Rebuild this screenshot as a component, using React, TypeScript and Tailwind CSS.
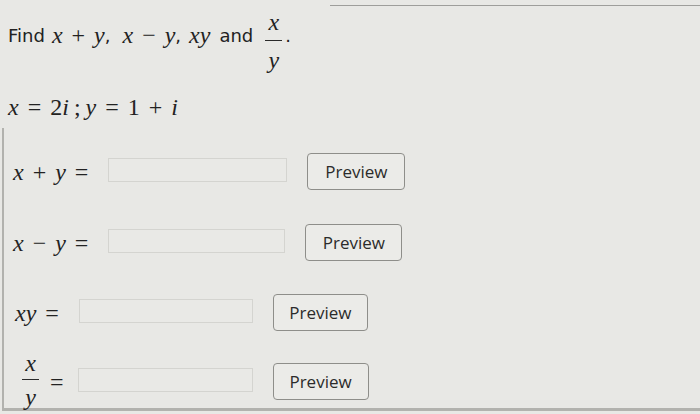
import React from "react";

const mathFont = "font-['Liberation_Serif','DejaVu_Serif',serif]";
const sansFont = "font-['DejaVu_Sans','Liberation_Sans',sans-serif]";

function V({ children }: { children: React.ReactNode }) {
  return <span className="italic">{children}</span>;
}

function Op({ children }: { children: React.ReactNode }) {
  return <span className="mx-[9px]">{children}</span>;
}

type FracProps = {
  num: React.ReactNode;
  den: React.ReactNode;
  className?: string;
  top?: string;
  bottom?: string;
};

function Frac({ num, den, className = "", top = "pb-[4px]", bottom = "pt-[5px]" }: FracProps) {
  return (
    <span className={`inline-flex flex-col items-center leading-none ${className}`}>
      <span className={top}>{num}</span>
      <span className="h-px w-[17px] bg-[#2a2a2a]" />
      <span className={bottom}>{den}</span>
    </span>
  );
}

type RowProps = {
  label: React.ReactNode;
  className: string;
  inputWidth: string;
  buttonWidth: string;
};

function AnswerRow({ label, className, inputWidth, buttonWidth }: RowProps) {
  return (
    <div className={`flex h-[37px] items-center ${className}`}>
      <div className={`${mathFont} flex items-center text-[24px] text-[#222] whitespace-nowrap`}>{label}</div>
      <div className={`ml-[11px] mt-[-3px] h-[24px] shrink-0 border border-[#d4d4d0] bg-[#e9e9e6] ${inputWidth}`} />
      <button
        className={`ml-[20px] h-[37px] shrink-0 rounded-[4px] border border-[#8e8e8a] bg-[#ebebe8] font-['Open_Sans',sans-serif] text-[17px] text-[#2b2b2b] ${buttonWidth}`}
      >
        Preview
      </button>
    </div>
  );
}

export default function App() {
  return (
    <div className="h-[414px] w-[700px] overflow-hidden bg-[#e8e8e5] text-[#222]">
      <div className="flex pt-[5px]">
        <div className="w-[330px]" />
        <div className="flex-1 border-t border-[#9e9e9b]" />
      </div>

      <div className={`ml-[8px] mt-[-8px] flex items-center ${sansFont} text-[18px]`}>
        <span>Find</span>
        <span className={`${mathFont} ml-[7px] text-[24px]`}>
          <V>x</V>
          <Op>+</Op>
          <V>y</V>
        </span>
        <span>,</span>
        <span className={`${mathFont} ml-[12px] text-[24px]`}>
          <V>x</V>
          <Op>−</Op>
          <V>y</V>
        </span>
        <span>,</span>
        <span className={`${mathFont} ml-[8px] text-[24px]`}>
          <V>xy</V>
        </span>
        <span className="ml-[9px]">and</span>
        <Frac
          num={<V>x</V>}
          den={<V>y</V>}
          top="pb-[6px]"
          bottom="pt-[7px]"
          className={`${mathFont} ml-[12px] mt-[12px] text-[24px]`}
        />
        <span className="ml-[3px]">.</span>
      </div>

      <div className={`${mathFont} ml-[8px] mt-[22px] text-[24px] leading-[26px]`}>
        <V>x</V>
        <Op>=</Op>
        <span>2</span>
        <V>i</V>
        <span className="mx-[5px]">;</span>
        <V>y</V>
        <Op>=</Op>
        <span>1</span>
        <Op>+</Op>
        <V>i</V>
      </div>

      <div className="ml-[2px] mt-[8px] border-b-[3px] border-l-2 border-[#b2b2ae] pb-[8px] pt-[25px]">
        <AnswerRow
          className="ml-[9px]"
          inputWidth="w-[179px]"
          buttonWidth="w-[98px]"
          label={
            <>
              <V>x</V>
              <Op>+</Op>
              <V>y</V>
              <Op>=</Op>
            </>
          }
        />
        <AnswerRow
          className="ml-[9px] mt-[34px]"
          inputWidth="w-[177px]"
          buttonWidth="w-[97px]"
          label={
            <>
              <V>x</V>
              <Op>−</Op>
              <V>y</V>
              <Op>=</Op>
            </>
          }
        />
        <AnswerRow
          className="ml-[11px] mt-[33px]"
          inputWidth="w-[174px]"
          buttonWidth="w-[95px]"
          label={
            <>
              <V>xy</V>
              <Op>=</Op>
            </>
          }
        />
        <AnswerRow
          className="ml-[14px] mt-[32px]"
          inputWidth="w-[175px]"
          buttonWidth="w-[96px]"
          label={
            <>
              <Frac num={<V>x</V>} den={<V>y</V>} className="mb-[4px] ml-[4px]" />
              <span className="ml-[11px] mr-[3px]">=</span>
            </>
          }
        />
      </div>
    </div>
  );
}
